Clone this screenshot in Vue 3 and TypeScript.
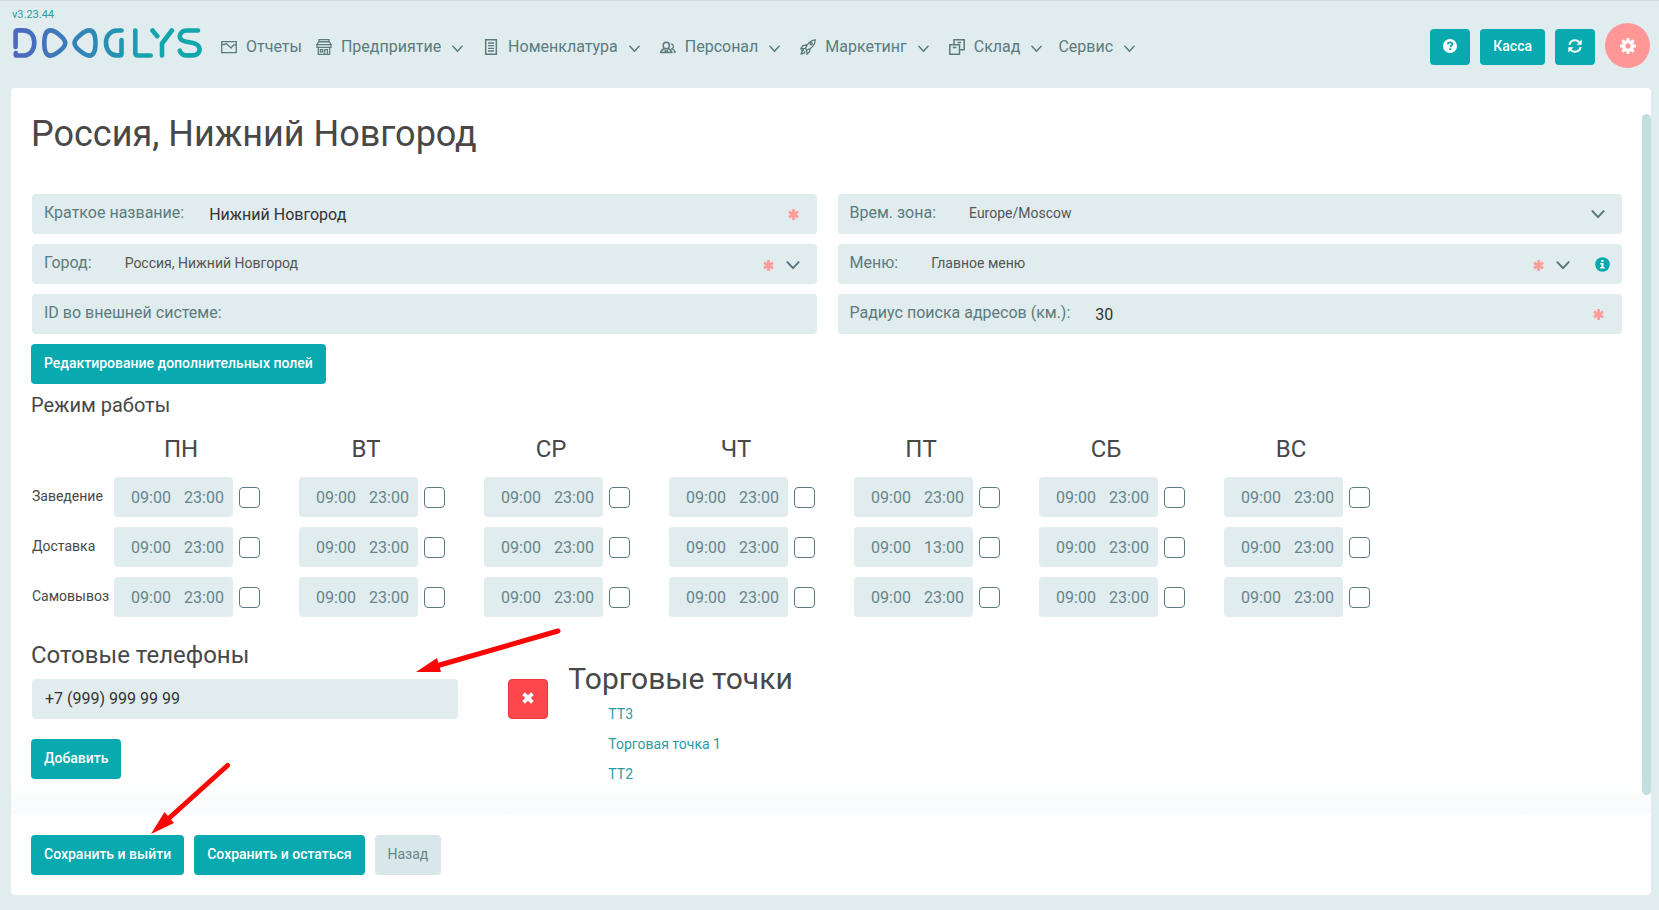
<script setup lang="ts">
import { reactive, ref } from 'vue'

interface NavItem {
  title: string
  icon: 'reports' | 'store' | 'list' | 'staff' | 'rocket' | 'boxes' | null
  menu: boolean
}

interface Slot {
  from: string
  to: string
  off: boolean
}

interface Mode {
  id: string
  title: string
  slots: Slot[]
}

const version = 'v3.23.44'

const nav: NavItem[] = [
  { title: 'Отчеты', icon: 'reports', menu: false },
  { title: 'Предприятие', icon: 'store', menu: true },
  { title: 'Номенклатура', icon: 'list', menu: true },
  { title: 'Персонал', icon: 'staff', menu: true },
  { title: 'Маркетинг', icon: 'rocket', menu: true },
  { title: 'Склад', icon: 'boxes', menu: true },
  { title: 'Сервис', icon: null, menu: true },
]

const days: string[] = ['ПН', 'ВТ', 'СР', 'ЧТ', 'ПТ', 'СБ', 'ВС']

const makeSlots = (): Slot[] => days.map(() => ({ from: '09:00', to: '23:00', off: false }))

const modes = reactive<Mode[]>([
  { id: 'hall', title: 'Заведение', slots: makeSlots() },
  { id: 'delivery', title: 'Доставка', slots: makeSlots() },
  { id: 'pickup', title: 'Самовывоз', slots: makeSlots() },
])
modes[1].slots[4].to = '13:00'

const form = reactive({
  name: 'Нижний Новгород',
  city: 'Россия, Нижний Новгород',
  externalId: '',
  zone: 'Europe/Moscow',
  menu: 'Главное меню',
  radius: '30',
})

const phones = ref<string[]>(['+7 (999) 999 99 99'])
const points: string[] = ['ТТ3', 'Торговая точка 1', 'ТТ2']

const addPhone = (): void => {
  phones.value.push('')
}
const removePhone = (index: number): void => {
  phones.value.splice(index, 1)
}
</script>

<template>
  <div class="page">
    <svg class="defs" width="0" height="0" aria-hidden="true">
      <symbol id="chevron" viewBox="0 0 12 8">
        <path d="M1 1l5 5.4L11 1" fill="none" stroke="currentColor" stroke-width="1.7" stroke-linecap="round" stroke-linejoin="round" />
      </symbol>
      <symbol id="required" viewBox="0 0 10 10">
        <path d="M5 0v10M.8 2.600l8.400 4.800M9.200 2.600L.8 7.400" fill="none" stroke="currentColor" stroke-width="2.600" />
      </symbol>
    </svg>

    <header class="header">
      <div class="brand">
        <span class="version">{{ version }}</span>
        <a href="#" class="logo" aria-label="Dooglys">
          <svg width="190" height="30" viewBox="0 0 190 30">
            <defs>
              <linearGradient id="brand" gradientUnits="userSpaceOnUse" x1="0" y1="0" x2="190" y2="0">
                <stop offset="0" stop-color="#4d68c0" />
                <stop offset=".12" stop-color="#4670bd" />
                <stop offset=".45" stop-color="#2c8cb4" />
                <stop offset=".72" stop-color="#12a5ad" />
                <stop offset="1" stop-color="#12a7ad" />
              </linearGradient>
            </defs>
            <g fill="none" stroke="url(#brand)" stroke-width="4.6" stroke-linejoin="round" stroke-linecap="round">
              <path d="M2.600 19V4.600q0-2.200 2.200-2.200H10c7.500 0 11.300 5.400 11.300 12.300S17.500 27.500 10 27.500H3.200" />
              <path d="M2.800 25v2.200" />
              <path d="M37.500 2.400C42 2.400 52.300 10.300 52.300 15S42 27.600 37.500 27.600C32.600 27.600 31.300 22 31.300 15S32.600 2.400 37.500 2.400Z" />
              <path d="M76.300 2.400C71.800 2.400 61.500 10.300 61.500 15S71.800 27.600 76.300 27.600C81.200 27.600 82.500 22 82.500 15S81.200 2.400 76.300 2.400Z" />
              <path d="M108.500 2.500H104.500c-7.200 0-11.500 5.300-11.500 12.300s4.300 12.600 10.800 12.600h3q1.700 0 1.700-1.700V12" />
              <path d="M122.300 2.500v22.600q0 2.400 2.400 2.400h13" />
              <path d="M139.500 2.500l4.800 5.700M158.800 2.500L149 15.500V27.500" />
              <path d="M185 2.500h-11c-7 0-8 5.500-6.500 8.200c3 5.300 14.500 1.800 18.100 7.500c2.600 4.300-.3 9.200-6.300 9.200h-5.500c-3.500 0-6-1.700-7-4.700" />
            </g>
          </svg>
        </a>
      </div>

      <nav class="nav">
        <a v-for="item in nav" :key="item.title" href="#" class="nav-item">
          <svg v-if="item.icon" class="nav-icon" :class="item.icon" viewBox="0 0 16 16" width="16" height="16" fill="none" stroke="currentColor" stroke-width="1.300" aria-hidden="true">
            <template v-if="item.icon === 'reports'">
              <path d="M.7 2.700h14.600v11H.7zM1 5.500L3.500 5.500L5.300 4.600L10 9L12.500 6L15 5.500" />
            </template>
            <template v-else-if="item.icon === 'store'">
              <path stroke-width="1.200" d="M3 .7h10v2H3zM2.700 2.900L.8 5.700h14.400L13.300 2.900zM1 5.900v2.400h14V5.900M2.300 8.500v6.800h11.400V8.500M8.700 15v-4.300h2.800V15M4.300 10.600h2.400v2.200H4.300z" />
            </template>
            <template v-else-if="item.icon === 'list'">
              <path stroke-width="1.500" d="M2.700.8h10.600v14.400H2.700z" />
              <path d="M5 4h6M5 6.700h6M5 9.300h6M5 12h6" />
            </template>
            <template v-else-if="item.icon === 'staff'">
              <path stroke-width="1.500" d="M6.300 3.200a3.100 3.300 0 1 1 0 6.600a3.100 3.300 0 1 1 0-6.600zM4.500 9.500c-2 .8-3.400 1.500-3.700 3.900h11c-.3-2.400-1.700-3.100-3.700-3.900M4.500 11.500l1.800 1l1.800-1" />
              <path d="M11 5.200c2.500-.5 3.300 3.300 1 4.600c1.700.5 2.800 1.300 3.200 3.400h-1.700" />
            </template>
            <template v-else-if="item.icon === 'rocket'">
              <path d="M5.400 9.500C7 4.800 10 1.300 15.300.8C15.200 6 11.500 9.500 6.800 11zM6.500 6L3 6.700L.8 9.600l4 .1M10.100 9.700L9.600 12.700L7 15.200L6.600 11M4 11c-1.700.3-2.500 2-2.800 4c2-.2 3.500-1 3.900-2.700M2.300 9.700L1.500 12" />
              <circle cx="11.200" cy="4.800" r="1.100" />
            </template>
            <template v-else-if="item.icon === 'boxes'">
              <path stroke-width="1.500" d="M.8 5.800h9.700v9.400H.8zM5 5.500V.8h10.200v10H10.800M3.800 8.500h3.600M8.500 3.600h3.500" />
            </template>
          </svg>
          <span class="nav-title">{{ item.title }}</span>
          <svg v-if="item.menu" class="nav-chevron" width="11" height="8" aria-hidden="true"><use href="#chevron" /></svg>
        </a>
      </nav>

      <div class="tools">
        <button type="button" class="btn tool" aria-label="Помощь">
          <svg width="14" height="14" viewBox="0 0 14 14" aria-hidden="true">
            <circle cx="7" cy="7" r="7" fill="#fff" />
            <path d="M4.800 5.300C5 3.900 6 3.400 7.100 3.400c1.300 0 2.200.7 2.200 1.800c0 1.400-2 1.400-2 3" fill="none" stroke="#08a9af" stroke-width="1.900" />
            <path d="M6.300 9.200h2v1.900h-2z" fill="#08a9af" />
          </svg>
        </button>
        <button type="button" class="btn tool">Касса</button>
        <button type="button" class="btn tool" aria-label="Обновить">
          <svg width="14" height="14" viewBox="0 0 14 14" aria-hidden="true">
            <path d="M1.400 6C2 3 4.300 1.300 7 1.300c1.800 0 3.200.7 4.400 1.900M12.600 8c-.6 3-2.900 4.700-5.600 4.700c-1.800 0-3.200-.7-4.400-1.900" fill="none" stroke="#fff" stroke-width="1.900" />
            <path d="M13.700.5v5.200H8.500zM.3 13.500V8.300h5.200z" fill="#fff" />
          </svg>
        </button>
        <button type="button" class="settings" aria-label="Настройки">
          <svg width="16" height="16" viewBox="0 0 16 16" aria-hidden="true">
            <circle cx="8" cy="8" r="4.300" fill="none" stroke="#fff" stroke-width="3.300" />
            <path d="M8 0v3M8 13v3M0 8h3M13 8h3M2.400 2.400l2 2M11.600 11.600l2 2M13.600 2.400l-2 2M4.400 11.600l-2 2" stroke="#fff" stroke-width="2.900" />
          </svg>
        </button>
      </div>
    </header>

    <main class="panel">
      <div class="content">
        <h1 class="title">Россия, Нижний Новгород</h1>

        <div class="fields">
          <div class="field">
            <label for="name">Краткое название:</label>
            <input id="name" v-model="form.name" type="text" required />
            <svg class="required" width="11" height="11" aria-hidden="true"><use href="#required" /></svg>
          </div>
          <div class="field">
            <label for="zone">Врем. зона:</label>
            <select id="zone" v-model="form.zone"><option>Europe/Moscow</option></select>
            <svg class="chevron" width="14" height="9" aria-hidden="true"><use href="#chevron" /></svg>
          </div>
          <div class="field">
            <label for="city">Город:</label>
            <select id="city" v-model="form.city"><option>Россия, Нижний Новгород</option></select>
            <svg class="required" width="11" height="11" aria-hidden="true"><use href="#required" /></svg>
            <svg class="chevron" width="14" height="9" aria-hidden="true"><use href="#chevron" /></svg>
          </div>
          <div class="field with-info">
            <label for="menu">Меню:</label>
            <select id="menu" v-model="form.menu"><option>Главное меню</option></select>
            <svg class="required" width="11" height="11" aria-hidden="true"><use href="#required" /></svg>
            <svg class="chevron" width="14" height="9" aria-hidden="true"><use href="#chevron" /></svg>
            <button type="button" class="info" aria-label="Подсказка">
              <svg width="15" height="15" viewBox="0 0 15 15" aria-hidden="true">
                <circle cx="7.500" cy="7.500" r="7.300" fill="#08a9af" />
                <path d="M6.300 3h2.200v1.900H6.300zM5.200 6.100h3.300v3.900h1.200v1.500H5.200V10h1.200V7.600H5.200z" fill="#fff" />
              </svg>
            </button>
          </div>
          <div class="field">
            <label for="external">ID во внешней системе:</label>
            <input id="external" v-model="form.externalId" type="text" />
          </div>
          <div class="field">
            <label for="radius">Радиус поиска адресов (км.):</label>
            <input id="radius" v-model="form.radius" type="text" required />
            <svg class="required" width="11" height="11" aria-hidden="true"><use href="#required" /></svg>
          </div>
        </div>

        <button type="button" class="btn">Редактирование дополнительных полей</button>

        <h2 class="subtitle">Режим работы</h2>

        <table class="schedule">
          <thead>
            <tr>
              <td></td>
              <th v-for="day in days" :key="day" scope="col"><div class="day">{{ day }}</div></th>
            </tr>
          </thead>
          <tbody>
            <tr v-for="mode in modes" :key="mode.id">
              <th scope="row">{{ mode.title }}</th>
              <td v-for="(slot, i) in mode.slots" :key="days[i]">
                <div class="slot">
                  <div class="hours">
                    <input v-model="slot.from" type="text" :aria-label="`${mode.title}, ${days[i]}, с`" />
                    <input v-model="slot.to" type="text" :aria-label="`${mode.title}, ${days[i]}, до`" />
                  </div>
                  <input v-model="slot.off" class="check" type="checkbox" :aria-label="`${mode.title}, ${days[i]}, выходной`" />
                </div>
              </td>
            </tr>
          </tbody>
        </table>

        <div class="columns">
          <section class="phones">
            <h2>Сотовые телефоны</h2>
            <div v-for="(phone, i) in phones" :key="i" class="phone">
              <input v-model="phones[i]" type="tel" aria-label="Телефон" />
              <button type="button" class="remove" aria-label="Удалить" @click="removePhone(i)">
                <svg width="12" height="12" viewBox="0 0 12 12" aria-hidden="true">
                  <path d="M1.600 1.600l8.800 8.800M10.400 1.600l-8.800 8.800" stroke="#fff" stroke-width="3.800" />
                </svg>
              </button>
            </div>
            <button type="button" class="btn" @click="addPhone">Добавить</button>
          </section>
          <section class="points">
            <h2>Торговые точки</h2>
            <ul>
              <li v-for="point in points" :key="point"><a href="#">{{ point }}</a></li>
            </ul>
          </section>
        </div>
        <div class="scrollbar" aria-hidden="true"></div>
      </div>

      <footer class="actions">
        <button type="submit" class="btn">Сохранить и выйти</button>
        <button type="submit" class="btn">Сохранить и остаться</button>
        <button type="button" class="btn muted">Назад</button>
      </footer>
    </main>

    <svg class="pointer to-phone" width="150" height="50" viewBox="0 0 150 50" aria-hidden="true">
      <path d="M142 6L22 40.500" stroke="#fc0505" stroke-width="5" stroke-linecap="round" />
      <path d="M0 47L21 33L25 47z" fill="#fc0505" />
    </svg>
    <svg class="pointer to-save" width="86" height="76" viewBox="0 0 86 76" aria-hidden="true">
      <path d="M76.500 5.500L16 60" stroke="#fc0505" stroke-width="5" stroke-linecap="round" />
      <path d="M0 74L13.500 52L23 63z" fill="#fc0505" />
    </svg>
  </div>
</template>

<style>
body {
  margin: 0;
  background: #e0ecee;
}
</style>

<style scoped>
.page {
  position: relative;
  display: flex;
  flex-direction: column;
  box-sizing: border-box;
  min-height: 100vh;
  border-top: 1px solid #d5dcde;
  background: #e0ecee;
  color: #484848;
  font: 14px/20px Roboto, "Liberation Sans", sans-serif;
}
.page * {
  box-sizing: border-box;
}
.defs {
  position: absolute;
}
button,
input,
select {
  font-family: inherit;
  border: 0;
  margin: 0;
  border-radius: 4px;
}
button {
  cursor: pointer;
}
h1,
h2 {
  margin: 0;
  font-weight: 400;
}
a {
  text-decoration: none;
}
svg {
  display: block;
  flex: none;
}

.header {
  display: flex;
  align-items: center;
  height: 87px;
  padding: 5px 9px 0 12px;
}
.brand {
  align-self: flex-start;
  padding-top: 2px;
}
.version {
  display: block;
  margin-bottom: 6px;
  color: #2a9fa5;
  font-size: 11px;
  line-height: 14px;
}
.logo {
  display: block;
  padding-left: 1px;
}
.nav {
  display: flex;
  flex: 1;
  margin-left: 18px;
}
.nav-item {
  display: flex;
  align-items: center;
  margin-right: 14px;
  color: #5c7b7e;
  font-size: 16px;
  line-height: 20px;
}
.nav-item:nth-child(n + 2) {
  margin-right: 20px;
}
.nav-item:nth-child(6) {
  margin-right: 16px;
}
.nav-icon {
  margin-right: 9px;
}
.nav-chevron {
  margin: 3px 0 0 11px;
}
.tools {
  display: flex;
  align-items: center;
  gap: 10px;
}
.btn {
  display: inline-flex;
  align-items: center;
  justify-content: center;
  height: 40px;
  padding: 0 13px 2px;
  background: #08a9af;
  color: #fff;
  font-size: 14px;
  font-weight: 500;
  line-height: 20px;
}
.btn.tool {
  height: 36px;
}
.btn.muted {
  background: #d9e7ea;
  color: #66858a;
  font-weight: 400;
}
.settings {
  display: flex;
  align-items: center;
  justify-content: center;
  width: 45px;
  height: 45px;
  margin-bottom: 3px;
  padding: 0;
  border-radius: 50%;
  background: #ff9797;
}

.panel {
  display: flex;
  flex: 1;
  flex-direction: column;
  margin: 0 8px 15px 11px;
  border-radius: 4px;
  background: #fff;
}
.content {
  position: relative;
  flex: 1;
  padding: 24px 28px 20px 20px;
  border-radius: 4px 4px 0 0;
  background: linear-gradient(to top, #f8fafb, #fff 36px);
}
.scrollbar {
  position: absolute;
  top: 26px;
  right: 0;
  bottom: 19px;
  width: 9px;
  border-radius: 5px;
  background: #c3dfe2;
}
.title {
  margin-bottom: 38px;
  font-size: 36px;
  line-height: 44px;
}

.fields {
  display: grid;
  grid-template-columns: 1fr 1fr;
  gap: 10px 21px;
  margin-bottom: 10px;
  padding: 0 1px;
}
.field {
  display: flex;
  align-items: center;
  height: 40px;
  padding: 0 18px 0 12px;
  border-radius: 4px;
  background: #e0ecee;
}
.field.with-info {
  padding-right: 12px;
}
.field label {
  padding-bottom: 2px;
  color: #5c7b7e;
  font-size: 16px;
  line-height: 20px;
}
.field input {
  flex: 1;
  min-width: 0;
  height: 40px;
  padding: 0 0 0 25px;
  background: none;
  color: #333;
  font-size: 16px;
}
.field select {
  flex: 1;
  min-width: 0;
  height: 40px;
  padding: 0 0 2px 33px;
  appearance: none;
  background: none;
  color: #555;
  font-size: 14px;
}
.required {
  color: #ff9d9d;
}
.chevron {
  margin-right: -1px;
  color: #54767a;
}
select + .required {
  margin-top: 2px;
}
.required + .chevron {
  margin: 2px -1px 0 12px;
}
.info {
  margin-left: 26px;
  padding: 0;
  background: none;
}

.subtitle {
  margin: 9px 0 18px;
  font-size: 20px;
  line-height: 24px;
}
.schedule {
  border-collapse: collapse;
}
.schedule td,
.schedule th {
  padding: 0 0 10px;
  font-weight: 400;
  text-align: left;
  vertical-align: middle;
}
.schedule thead th {
  padding-bottom: 14px;
}
.schedule tbody th {
  min-width: 83px;
  padding: 0 5px 12px 1px;
}
.day {
  width: 134px;
  font-size: 24px;
  line-height: 28px;
  text-align: center;
}
.slot {
  display: flex;
  align-items: center;
  gap: 6px;
  width: 185px;
}
.hours {
  display: flex;
  gap: 8px;
  width: 119px;
  height: 40px;
  padding: 0 4px 0 17px;
  border-radius: 4px;
  background: #e0ecee;
}
.hours input {
  width: 45px;
  height: 40px;
  padding: 0;
  background: none;
  color: #67858a;
  font-size: 16px;
}
.check {
  width: 21px;
  height: 21px;
  margin-top: 1px;
  appearance: none;
  border: 1px solid #5c7b7e;
  background: #fff;
}
.check:checked {
  background: #08a9af;
}

.columns {
  display: grid;
  grid-template-columns: 1fr 2fr;
  margin: 0 -10px;
}
.columns section {
  padding: 0 10px;
}
.phones h2 {
  margin: 14px 0 10px;
  font-size: 24px;
  line-height: 28px;
}
.phone {
  display: flex;
  gap: 50px;
  margin-bottom: 20px;
}
.phone input {
  flex: 1;
  min-width: 0;
  height: 40px;
  margin-left: 1px;
  padding: 0 13px 2px;
  background: #e0ecee;
  color: #333;
  font-size: 16px;
}
.remove {
  display: flex;
  align-items: center;
  justify-content: center;
  width: 40px;
  height: 40px;
  padding: 0 0 2px;
  border: 1px solid #e8363e;
  background: #ff474e;
}
.points h2 {
  margin: 34px 0 2px;
  font-size: 30px;
  line-height: 36px;
}
.points ul {
  margin: 0;
  padding: 0 0 0 40px;
  list-style: none;
}
.points li {
  line-height: 30px;
}
.points a {
  color: #2b9aa1;
}

.actions {
  display: flex;
  gap: 10px;
  padding: 21px 20px 20px;
}

.pointer {
  position: absolute;
  pointer-events: none;
}
.to-phone {
  top: 624px;
  left: 416px;
}
.to-save {
  top: 759px;
  left: 151px;
}
</style>
